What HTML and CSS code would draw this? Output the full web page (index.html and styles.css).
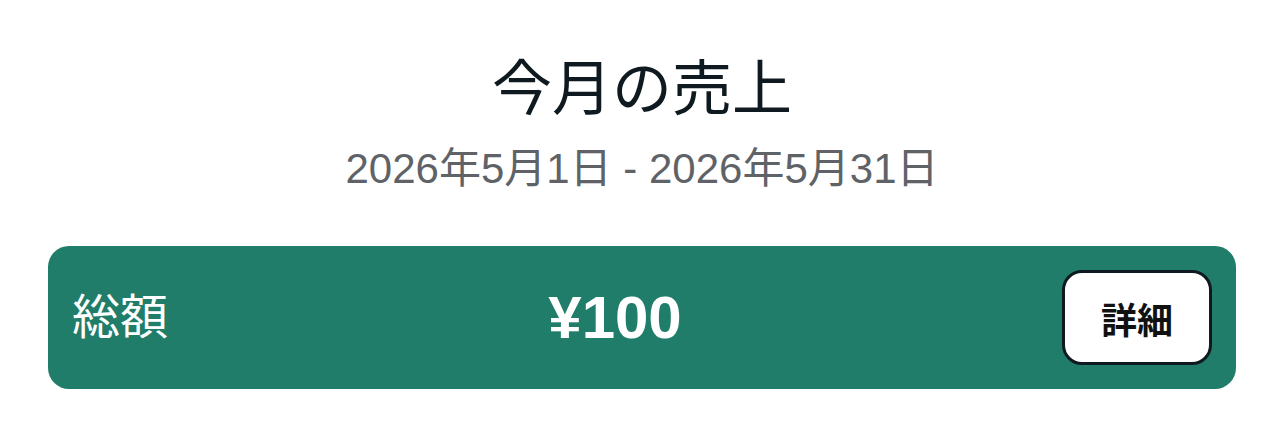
FILE: index.html
```html
<!DOCTYPE html>
<html lang="ja">
<head>
  <meta charset="UTF-8">
  <meta name="viewport" content="width=device-width, initial-scale=1.0">
  <title>今月の売上</title>
  <link rel="stylesheet" href="styles.css">
</head>
<body>
  <div id="wrap">
    <!-- ヘッダー -->
    <h1 class="title">今月の売上</h1>
    <p class="period">2026年5月1日 - 2026年5月31日</p>

    <!-- 合計カード -->
    <div class="total-card">
      <span class="total-label">総額</span>
      <span class="total-amount">¥100</span>
      <button class="detail-btn">詳細</button>
    </div>
  </div>
</body>
</html>
```

FILE: styles.css
```css
body{
  margin: 0;
  background: #fff;
  font-family: "Liberation Sans", "Noto Sans CJK JP", sans-serif;
}
#wrap{
  padding: 54px 48px 0;
}
.title{
  margin: 0;
  font-size: 60px;
  line-height: 72px;
  font-weight: 400;
  text-align: center;
  color: #0e1a1f;
}
.period{
  margin: 18px 0 0;
  font-size: 42px;
  line-height: 50px;
  text-align: center;
  color: #5f6368;
}
.total-card{
  display: flex;
  align-items: center;
  margin-top: 52px;
  padding: 24px;
  background: #207d69;
  border-radius: 21px;
  color: #fff;
}
.total-label{
  font-size: 48px;
  line-height: 60px;
}
.total-amount{
  flex: 1;
  text-align: center;
  font-size: 60px;
  font-weight: 700;
  line-height: 72px;
}
.detail-btn{
  width: 150px;
  height: 95px;
  border: 3px solid #0e1a1f;
  border-radius: 20px;
  background: #fff;
  color: #111;
  font-family: inherit;
  font-size: 36px;
  font-weight: 700;
  cursor: pointer;
}
```
